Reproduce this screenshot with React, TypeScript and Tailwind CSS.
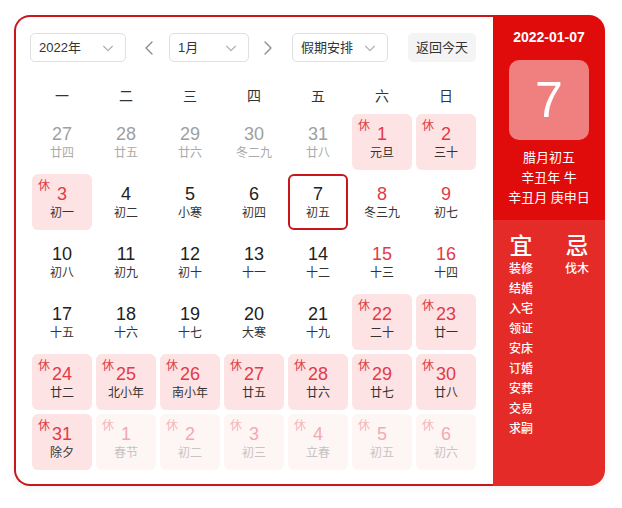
import React from 'react';

type Day = {
  n: number;
  lunar: string;
  rest?: boolean;
  red?: boolean;
  other?: 'prev' | 'next';
  selected?: boolean;
};

const weeks = ['一', '二', '三', '四', '五', '六', '日'];

const days: Day[] = [
  { n: 27, lunar: '廿四', other: 'prev' },
  { n: 28, lunar: '廿五', other: 'prev' },
  { n: 29, lunar: '廿六', other: 'prev' },
  { n: 30, lunar: '冬二九', other: 'prev' },
  { n: 31, lunar: '廿八', other: 'prev' },
  { n: 1, lunar: '元旦', rest: true },
  { n: 2, lunar: '三十', rest: true },
  { n: 3, lunar: '初一', rest: true },
  { n: 4, lunar: '初二' },
  { n: 5, lunar: '小寒' },
  { n: 6, lunar: '初四' },
  { n: 7, lunar: '初五', selected: true },
  { n: 8, lunar: '冬三九', red: true },
  { n: 9, lunar: '初七', red: true },
  { n: 10, lunar: '初八' },
  { n: 11, lunar: '初九' },
  { n: 12, lunar: '初十' },
  { n: 13, lunar: '十一' },
  { n: 14, lunar: '十二' },
  { n: 15, lunar: '十三', red: true },
  { n: 16, lunar: '十四', red: true },
  { n: 17, lunar: '十五' },
  { n: 18, lunar: '十六' },
  { n: 19, lunar: '十七' },
  { n: 20, lunar: '大寒' },
  { n: 21, lunar: '十九' },
  { n: 22, lunar: '二十', rest: true },
  { n: 23, lunar: '廿一', rest: true },
  { n: 24, lunar: '廿二', rest: true },
  { n: 25, lunar: '北小年', rest: true },
  { n: 26, lunar: '南小年', rest: true },
  { n: 27, lunar: '廿五', rest: true },
  { n: 28, lunar: '廿六', rest: true },
  { n: 29, lunar: '廿七', rest: true },
  { n: 30, lunar: '廿八', rest: true },
  { n: 31, lunar: '除夕', rest: true },
  { n: 1, lunar: '春节', rest: true, other: 'next' },
  { n: 2, lunar: '初二', rest: true, other: 'next' },
  { n: 3, lunar: '初三', rest: true, other: 'next' },
  { n: 4, lunar: '立春', rest: true, other: 'next' },
  { n: 5, lunar: '初五', rest: true, other: 'next' },
  { n: 6, lunar: '初六', rest: true, other: 'next' },
];

const yi = ['装修', '结婚', '入宅', '领证', '安床', '订婚', '安葬', '交易', '求嗣'];
const ji = ['伐木'];

function Chevron({ dir = 'down', className = '' }: { dir?: 'down' | 'left' | 'right'; className?: string }) {
  const d = dir === 'down' ? 'M3 6l5 5 5-5' : dir === 'left' ? 'M10 2L4 8l6 6' : 'M6 2l6 6-6 6';
  return (
    <svg viewBox="0 0 16 16" className={className} fill="none" stroke="currentColor" strokeWidth="1.3" strokeLinecap="round" strokeLinejoin="round">
      <path d={d} />
    </svg>
  );
}

function Select({ label, width }: { label: string; width: string }) {
  return (
    <div className={`${width} h-[29px] border border-[#dcdfe6] rounded-[5px] flex items-center justify-between pl-[8px] pr-[10px] text-[13px] text-[#333]`}>
      <span>{label}</span>
      <Chevron className="w-[14px] h-[14px] text-[#a8abb2]" />
    </div>
  );
}

function DayCell({ d }: { d: Day }) {
  const next = d.other === 'next';
  const prev = d.other === 'prev';
  let box = 'border-2 border-transparent';
  if (d.selected) box = 'border-2 border-[#c8161d]';
  else if (d.rest && next) box = 'border-2 border-transparent bg-[#fef5f5]';
  else if (d.rest) box = 'border-2 border-transparent bg-[#fde3e4]';

  let num = 'text-[#222]';
  if (prev) num = 'text-[#a0a0a0]';
  else if (next) num = 'text-[#f3a9b1]';
  else if (d.rest || d.red) num = 'text-[#e23a48]';

  let lun = 'text-[#333]';
  if (prev) lun = 'text-[#aaaaaa]';
  else if (next) lun = 'text-[#c4c4c4]';

  return (
    <div className={`relative m-[2px] h-[56px] rounded-[6px] flex flex-col items-center justify-center ${box}`}>
      {d.rest && (
        <span className={`absolute left-[4px] top-[4px] text-[12px] leading-none ${next ? 'text-[#f5b6bd]' : 'text-[#e23a48]'}`}>休</span>
      )}
      <span className={`text-[18px] leading-[20px] ${num}`}>{d.n}</span>
      <span className={`text-[12px] leading-[16px] mt-[1px] ${lun}`}>{d.lunar}</span>
    </div>
  );
}

export default function App() {
  return (
    <div className="min-h-screen bg-white pt-[15px] pl-[14px]" style={{ fontFamily: '"Liberation Sans", "Noto Sans CJK SC", sans-serif' }}>
      <div className="flex w-[591px] h-[471px] rounded-[16px] shadow-[0_2px_10px_rgba(0,0,0,0.06)]">
        {/* Calendar */}
        <div className="w-[479px] border-2 border-r-0 border-[#c8161d] rounded-l-[16px] pl-[14px] pt-[16px]">
          <div className="flex items-center h-[29px]">
            <Select label="2022年" width="w-[96px]" />
            <Chevron dir="left" className="w-[16px] h-[16px] ml-[16px] text-[#888]" />
            <div className="ml-[11px]">
              <Select label="1月" width="w-[80px]" />
            </div>
            <Chevron dir="right" className="w-[16px] h-[16px] ml-[10px] text-[#888]" />
            <div className="ml-[17px]">
              <Select label="假期安排" width="w-[96px]" />
            </div>
            <div className="ml-[20px] h-[29px] w-[68px] rounded-[5px] bg-[#f4f4f5] text-[13px] text-[#333] flex items-center justify-center">
              返回今天
            </div>
          </div>

          <div className="grid grid-cols-7 w-[448px] h-[32px] mt-[18px] items-center text-[14px] text-[#333]">
            {weeks.map(w => (
              <div key={w} className="text-center">{w}</div>
            ))}
          </div>

          <div className="grid grid-cols-7 w-[448px]">
            {days.map((d, i) => (
              <DayCell key={i} d={d} />
            ))}
          </div>
        </div>

        {/* Side panel */}
        <div className="w-[112px] rounded-r-[16px] overflow-hidden flex flex-col text-white">
          <div className="h-[205px] bg-[#e00b0b] flex flex-col items-center pt-[14px]">
            <div className="text-[14px] font-bold leading-[16px]">2022-01-07</div>
            <div className="mt-[15px] w-[80px] h-[80px] rounded-[10px] bg-[#f08080] flex items-center justify-center text-[50px] leading-none">
              7
            </div>
            <div className="mt-[8px] text-[13px] leading-[20px] text-center">
              <div>腊月初五</div>
              <div>辛丑年 牛</div>
              <div>辛丑月 庚申日</div>
            </div>
          </div>
          <div className="flex-1 bg-[#e42b27] flex pt-[13px]">
            <div className="w-[56px] flex flex-col items-center">
              <div className="text-[23px] leading-[26px] font-medium">宜</div>
              {yi.map(t => (
                <div key={t} className="text-[12px] leading-[20px] font-medium">{t}</div>
              ))}
            </div>
            <div className="w-[56px] flex flex-col items-center">
              <div className="text-[23px] leading-[26px] font-medium">忌</div>
              {ji.map(t => (
                <div key={t} className="text-[12px] leading-[20px] font-medium">{t}</div>
              ))}
            </div>
          </div>
        </div>
      </div>
    </div>
  );
}
